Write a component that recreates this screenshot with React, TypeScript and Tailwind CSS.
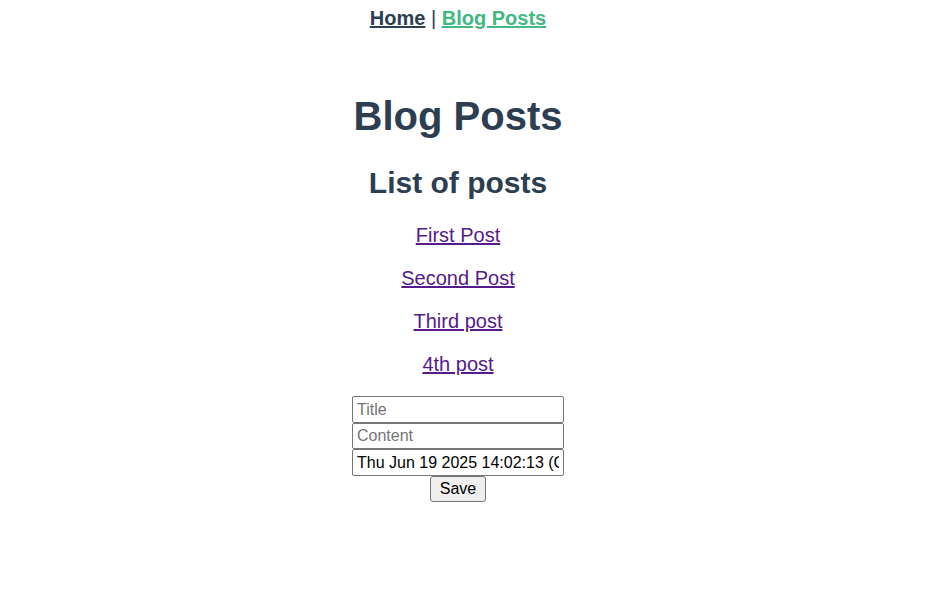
const posts = ["First Post", "Second Post", "Third post", "4th post"]

export default function App() {
  return (
    <div className="w-[916px] text-center text-[#2c3e50] font-['Liberation_Sans',Arial,sans-serif] text-[20px] leading-[23px]">
      {/* Nav */}
      <nav className="pt-[7px]">
        <a href="#" className="font-bold underline text-[#2c3e50]">Home</a>
        <span> | </span>
        <a href="#" className="font-bold underline text-[#42b983]">Blog Posts</a>
      </nav>

      <h1 className="mt-[63px] text-[40px] leading-[46px] font-bold">Blog Posts</h1>
      <h2 className="mt-[27px] text-[30px] leading-[34px] font-bold">List of posts</h2>

      <div className="mt-[24px] flex flex-col gap-[20px]">
        {posts.map((p) => (
          <p key={p}>
            <a href="#" className="underline text-[#551a8b]">{p}</a>
          </p>
        ))}
      </div>

      {/* New post form */}
      <form className="mt-[20px] flex flex-col items-center text-[16px] text-black" onSubmit={(e) => e.preventDefault()}>
        <input
          placeholder="Title"
          className="w-[212px] h-[26.5px] px-[4px] pt-[1px] border border-[#767676] rounded-[2px] placeholder:text-[#757575] outline-none"
        />
        <input
          placeholder="Content"
          className="w-[212px] h-[26.5px] px-[4px] pt-[1px] border border-[#767676] rounded-[2px] placeholder:text-[#757575] outline-none"
        />
        <input
          defaultValue="Thu Jun 19 2025 14:02:13 (Central European Summer Time)"
          className="w-[212px] h-[26.5px] px-[4px] pt-[1px] border border-[#767676] rounded-[2px] outline-none"
        />
        <button type="submit" className="w-[56px] h-[26px] bg-[#efefef] border border-[#767676] rounded-[3px] leading-[18px]">
          Save
        </button>
      </form>
    </div>
  )
}
